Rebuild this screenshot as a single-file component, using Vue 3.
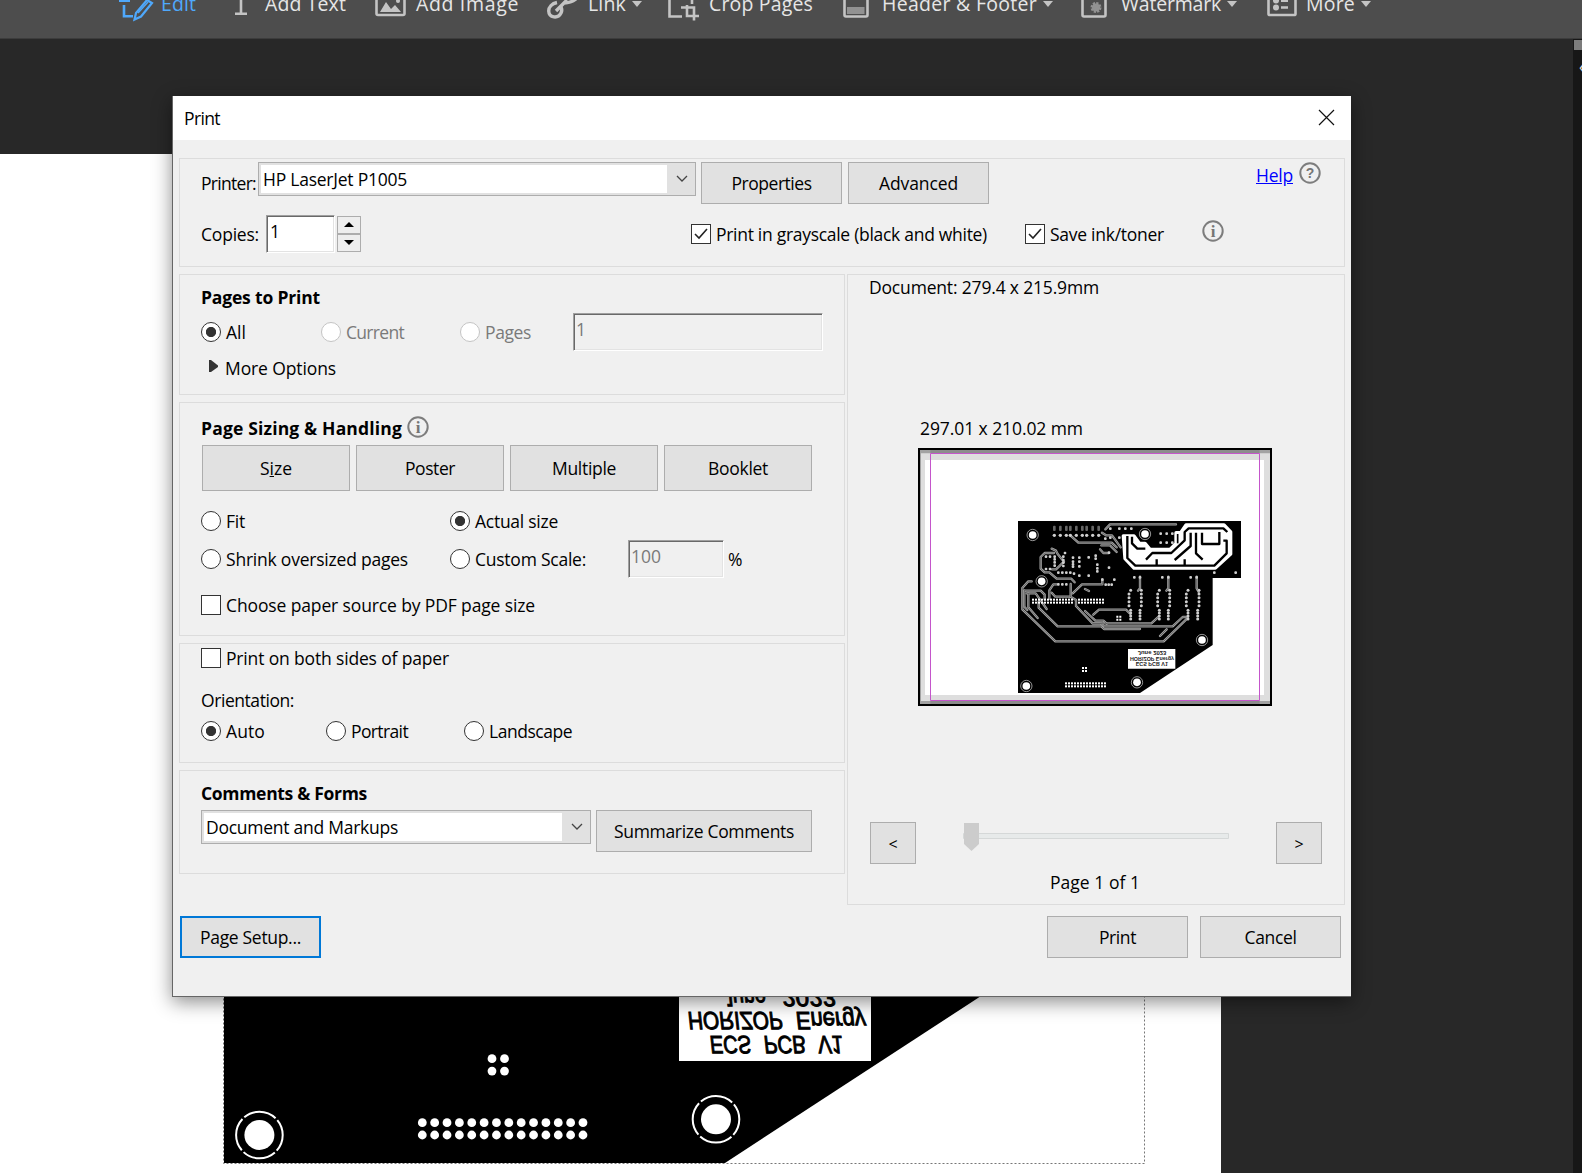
<script setup>
const tools = [
  { id: 'edit', label: 'Edit', fit: 35, active: true },
  { id: 'text', label: 'Add Text', fit: 81 },
  { id: 'image', label: 'Add Image', fit: 103 },
  { id: 'link', label: 'Link', fit: 38, menu: true },
  { id: 'crop', label: 'Crop Pages', fit: 104 },
  { id: 'header', label: 'Header & Footer', fit: 155, menu: true },
  { id: 'watermark', label: 'Watermark', fit: 100, menu: true },
  { id: 'more', label: 'More', fit: 49, menu: true },
]

const range = (n, start, step) => Array.from({ length: n }, (_, i) => start + i * step)
const headerPins = range(14, 422.3, 12.36)
const bigHoles = [[259.4, 1135], [716, 1119.3]]
const smallHoles = [[368, 375], [705, 372], [395, 514], [876, 690], [349, 828], [681, 817]]
const topPads = [433, 451, 469, 481, 499, 517, 530, 548, 566]
const driverColumns = [[662, 690], [748, 775], [834, 863]]
const padRow = [541, 552, 563, 575, 587, 601, 609, 618, 627]
const scatteredPads = [
  [586, 386], [601, 356], [628, 356], [646, 356], [664, 356], [601, 383], [628, 383],
  [752, 371], [770, 371], [787, 371], [752, 398], [770, 398], [787, 398],
  [465, 429], [508, 443], [508, 455], [508, 469], [536, 442], [557, 437], [557, 446],
  [562, 464], [562, 475], [562, 484], [597, 428], [597, 473], [536, 497], [508, 497],
  [489, 443], [489, 455], [489, 463], [489, 470], [492, 491], [408, 440], [420, 440],
  [408, 477], [420, 477], [445, 488], [457, 488], [469, 488], [481, 488], [445, 523],
  [457, 523], [469, 523], [577, 509], [613, 509], [587, 524], [596, 524], [605, 524],
  [434, 440], [434, 448], [434, 457], [434, 467], [460, 440], [460, 450], [460, 458], [460, 468],
  [913, 488], [977, 488], [673, 502], [690, 502], [757, 502], [775, 502], [842, 502], [860, 502],
]
const traces = [
  'M586 358 L600 343 H798',
  'M481 376 L505 398 H605 L620 412',
  'M576 368 L588 376 H606 L632 412',
  'M574 406 H600 L620 426',
  'M570 418 L580 429 H597',
  'M425 416 L438 422 L443 432 L462 455 L438 478 H426',
  'M432 429 H404 L392 441 V476 L404 487 H418 L440 506 H484 L494 517',
  'M482 522 V560 M440 523 H430 L418 541 V566',
  'M425 548 L436 560 H478',
  'M488 550 L516 523 H577 V508',
  'M365 514 H355 L337 534 V598 L436 694 H761 L832 625',
  'M343 542 H392 L404 554 V568',
  'M343 542 V590 L352 600',
  'M350 550 H377 L410 597',
  'M355 550 V592 L383 624',
  'M386 575 V593 L443 649 H574 L582 657 H690',
  'M482 560 L498 570 V588 L548 640 H724 L746 620',
  'M525 603 L556 632 H580 L590 641',
  'M548 640 H572 L582 649 H788 L818 621 H834',
  'M550 614 L567 599 H648 L661 612',
  'M750 678 L770 658',
  'M525 537 L537 543',
  'M690 500 V535 L684 542 M775 500 V535 L769 542 M860 500 V535 L866 546',
]

/* Spreads the letters of a label over a given width in pixels. */
const vFit = {
  mounted(el, { value }) {
    const natural = el.getBoundingClientRect().width
    el.style.letterSpacing = `${(value - natural) / el.textContent.length}px`
  },
}
</script>

<template>
  <div class="app">
    <header class="toolbar">
      <div v-for="t in tools" :key="t.id" class="tool" :class="[t.id, { active: t.active }]">
        <svg class="tool-icon" width="36" height="24" viewBox="0 0 36 24" fill="none" stroke="currentColor" stroke-width="2.6">
          <g v-if="t.id === 'edit'">
            <path d="M0 .7H11M5 5V16.3H14" />
            <path d="M15.5 19.5L17 13L28 0L33 3L22 16.500Z" stroke-width="2.2" /><path d="M19 13L29 2" stroke-width="1.5" />
          </g>
          <path v-else-if="t.id === 'text'" d="M6 0V13M0 13.700H12" />
          <g v-else-if="t.id === 'image'">
            <path d="M1.500 -4V13.500Q1.500 15 3 15H28Q29.500 15 29.500 13.500V-4" />
            <path d="M5 12L11 2L16 9L20 5L26 12Z" fill="currentColor" stroke="none" /><circle cx="23" cy="1" r="2" fill="currentColor" stroke="none" />
          </g>
          <g v-else-if="t.id === 'link'" stroke-width="3.400">
            <path d="M10 2.500C5 3.500 1.700 7 1.700 11C2 18 11 19 14 13C15 11 15 9 14 7" /><path d="M9 11L20 0M16 3Q23 3.500 29 -1" />
          </g>
          <g v-else-if="t.id === 'crop'">
            <path d="M1.500 -4V16.500H14" /><path d="M13 7.500H26V20.500M19 5V16H31M24 0V4" />
          </g>
          <g v-else-if="t.id === 'header'">
            <path d="M1.500 -4V15Q1.500 16.500 3 16.500H23Q24.500 16.500 24.500 15V-4" /><path d="M4 7H21.500V14H4Z" fill="#929292" stroke="none" />
          </g>
          <g v-else-if="t.id === 'watermark'">
            <path d="M1.500 -4V15Q1.500 16.500 3 16.500H23Q24.500 16.500 24.500 15V-4" />
            <circle cx="15" cy="7.500" r="4" fill="#929292" stroke="#929292" stroke-width="3" stroke-dasharray="2 1.100" />
          </g>
          <g v-else>
            <path d="M1.500 -4V14Q1.500 15 3 15H27Q28.500 15 28.500 14V-4" />
            <path d="M14 .8H21M14 7.500H21" /><circle cx="9" cy=".5" r="3" fill="currentColor" stroke="none" /><circle cx="9" cy="7.500" r="3" fill="currentColor" stroke="none" />
          </g>
        </svg>
        <span v-fit="t.fit" class="tool-label">{{ t.label }}</span>
        <i v-if="t.menu" class="arrow"></i>
      </div>
    </header>

    <main class="workspace">
      <div class="page">
        <svg width="1221" height="1019" viewBox="0 154 1221 1019">
          <rect x="223.5" y="600.5" width="921" height="563" fill="none" stroke="#777" stroke-dasharray="2 2" />
          <path d="M224 600H1144V889L979.500 997L725 1163H224Z" />
          <rect x="679" y="960" width="192" height="101" fill="#fff" />
          <g class="silk" transform="scale(1 -1)">
            <g transform="translate(722 -989) skewX(-6)"><text textLength="43" lengthAdjust="spacingAndGlyphs">June</text></g>
            <g transform="translate(781 -989) skewX(-6)"><text textLength="54" lengthAdjust="spacingAndGlyphs">2023</text></g>
            <g transform="translate(687 -1012) skewX(-6)"><text textLength="95" lengthAdjust="spacingAndGlyphs">HORIZOP</text></g>
            <g transform="translate(795 -1012) skewX(-6)"><text textLength="70" lengthAdjust="spacingAndGlyphs">Energy</text></g>
            <g transform="translate(709 -1036) skewX(-6)"><text textLength="41" lengthAdjust="spacingAndGlyphs">ECS</text></g>
            <g transform="translate(763 -1036) skewX(-6)"><text textLength="42" lengthAdjust="spacingAndGlyphs">PCB</text></g>
            <g transform="translate(817 -1036) skewX(-6)"><text textLength="25" lengthAdjust="spacingAndGlyphs">V1</text></g>
          </g>
          <g fill="#fff">
            <template v-for="y in [1058.700, 1071.100]" :key="y">
              <circle v-for="x in [492, 504.500]" :key="x" :cx="x" :cy="y" r="4.400" />
            </template>
            <template v-for="y in [1122.700, 1135]" :key="y">
              <circle v-for="x in headerPins" :key="x" :cx="x" :cy="y" r="4.400" />
            </template>
            <g v-for="[x, y] in bigHoles" :key="x">
              <circle :cx="x" :cy="y" r="15" />
              <circle :cx="x" :cy="y" r="23.300" fill="none" stroke="#fff" stroke-width="2" stroke-dasharray="34.100 2.500" stroke-dashoffset="17.050" />
            </g>
          </g>
        </svg>
      </div>
      <aside class="scrollbar"><div class="scroll-thumb"></div><div class="panel-arrow">‹</div></aside>
    </main>

    <section class="dialog">
      <div class="titlebar">
        <span v-fit="36">Print</span>
        <svg width="17" height="17" viewBox="0 0 17 17" stroke="#111" stroke-width="1.200"><path d="M1 1L16 16M16 1L1 16" /></svg>
      </div>

      <div class="body">
        <div class="group printer">
          <div class="row r-printer">
            <span v-fit="55" class="lbl">Printer:</span>
            <div class="combo"><div class="combo-text"><span v-fit="144">HP LaserJet P1005</span></div><svg width="12" height="8" viewBox="0 0 12 8"><path d="M1 1L6 6L11 1" /></svg></div>
            <button><span v-fit="80">Properties</span></button>
            <button><span v-fit="79">Advanced</span></button>
            <a v-fit="37">Help</a>
            <svg class="badge" width="22" height="22" viewBox="0 0 22 22"><circle cx="11" cy="11" r="9.700" /><text x="11" y="16">?</text></svg>
          </div>
          <div class="row r-copies">
            <span v-fit="58" class="lbl">Copies:</span>
            <div class="field"><span>1</span></div>
            <div class="spinner"><div><i class="up"></i></div><div><i class="down"></i></div></div>
            <div class="check"><svg width="18" height="18" viewBox="0 0 18 18"><path d="M3 9L7 13L15 4" /></svg></div>
            <span v-fit="271" class="lbl">Print in grayscale (black and white)</span>
            <div class="check"><svg width="18" height="18" viewBox="0 0 18 18"><path d="M3 9L7 13L15 4" /></svg></div>
            <span v-fit="114" class="lbl">Save ink/toner</span>
            <svg class="badge" width="22" height="22" viewBox="0 0 22 22"><circle cx="11" cy="11" r="9.700" /><text x="11" y="16.500" class="i">i</text></svg>
          </div>
        </div>

        <div class="columns">
          <div class="left">
            <div class="group pages">
              <h3 v-fit="119">Pages to Print</h3>
              <div class="row r-range">
                <div class="radio on"></div><span v-fit="20" class="lbl">All</span>
                <div class="radio off"></div><span v-fit="58" class="lbl dim">Current</span>
                <div class="radio off"></div><span v-fit="46" class="lbl dim">Pages</span>
                <div class="field disabled"><span>1</span></div>
              </div>
              <div class="more-options">
                <svg width="10" height="14" viewBox="0 0 10 14"><path d="M1 0L3 0L10 5.500V7L3 12H1Z" fill="#333" /></svg>
                <span v-fit="111">More Options</span>
              </div>
            </div>

            <div class="group sizing">
              <div class="heading">
                <h3 v-fit="201">Page Sizing &amp; Handling</h3>
                <svg class="badge" width="22" height="22" viewBox="0 0 22 22"><circle cx="11" cy="11" r="9.700" /><text x="11" y="16.500" class="i">i</text></svg>
              </div>
              <div class="modes">
                <button><span v-fit="32">S<u>i</u>ze</span></button>
                <button><span v-fit="50">Poster</span></button>
                <button><span v-fit="64">Multiple</span></button>
                <button><span v-fit="60">Booklet</span></button>
              </div>
              <div class="row r-fit">
                <div class="radio"></div><span v-fit="19" class="lbl">Fit</span>
                <div class="radio on"></div><span v-fit="83" class="lbl">Actual size</span>
              </div>
              <div class="row r-scale">
                <div class="radio"></div><span v-fit="182" class="lbl">Shrink oversized pages</span>
                <div class="radio"></div><span v-fit="111" class="lbl">Custom Scale:</span>
                <div class="field disabled"><span>100</span></div>
                <span v-fit="15" class="lbl">%</span>
              </div>
              <div class="row r-source">
                <div class="check"></div><span v-fit="309" class="lbl">Choose paper source by PDF page size</span>
              </div>
            </div>

            <div class="group layout">
              <div class="row r-duplex">
                <div class="check"></div><span v-fit="223" class="lbl">Print on both sides of paper</span>
              </div>
              <div class="orientation"><span v-fit="93">Orientation:</span></div>
              <div class="row r-orient">
                <div class="radio on"></div><span v-fit="39" class="lbl">Auto</span>
                <div class="radio"></div><span v-fit="57" class="lbl">Portrait</span>
                <div class="radio"></div><span v-fit="83" class="lbl">Landscape</span>
              </div>
            </div>

            <div class="group comments">
              <h3 v-fit="166">Comments &amp; Forms</h3>
              <div class="row r-comments">
                <div class="combo"><div class="combo-text"><span v-fit="192">Document and Markups</span></div><svg width="12" height="8" viewBox="0 0 12 8"><path d="M1 1L6 6L11 1" /></svg></div>
                <button><span v-fit="180">Summarize Comments</span></button>
              </div>
            </div>
          </div>

          <div class="group preview">
            <span v-fit="230" class="doc-size">Document: 279.4 x 215.9mm</span>
            <span v-fit="163" class="paper-size">297.01 x 210.02 mm</span>
            <svg class="sheet" width="354" height="258" viewBox="24 114 1062 774">
              <path d="M24 114H1086V888H24Z" />
              <path d="M30 120H1080V882H30Z" fill="#a2a2a2" />
              <path d="M61 120H1049V882H61Z" fill="#8c8c8c" />
              <path d="M33 130H1080V873H33Z" fill="#dedede" />
              <path d="M45 150H1062V855H45Z" fill="#fff" />
              <path d="M324 333H993V504H908V705L690 849H324Z" />
              <g fill="none" stroke-linejoin="round" stroke-linecap="round">
                <path v-for="d in traces" :key="d" :d="d" stroke="#a6a6a6" stroke-width="7" />
                <path v-for="d in traces" :key="'core' + d" :d="d" stroke="#5c5c5c" stroke-width="2.500" />
              </g>
              <g fill="#cfcfcf">
                <rect v-for="[x, y] in scatteredPads" :key="x + '-' + y" :x="x - 4" :y="y - 4" width="8" height="8" rx="3" />
                <g v-for="x in topPads" :key="x">
                  <circle :cx="x" cy="376" r="5" /><rect :x="x - 4" y="347" width="8" height="16" rx="3" fill="#666" />
                </g>
                <template v-for="([a, b], c) in driverColumns" :key="c">
                  <g v-for="y in padRow" :key="y">
                    <circle :cx="a - (y > 548 && y < 595 ? 5 : 0)" :cy="y" r="4.500" /><circle :cx="b + (y < 595 ? 4 : 0)" :cy="y" r="4.500" />
                  </g>
                </template>
              </g>
              <g fill="#fff">
                <template v-for="y in [569, 578]" :key="y">
                  <rect v-for="x in range(14, 366, 9)" :key="x" :x="x" :y="y - 3" width="6" height="6" />
                  <rect v-for="x in range(9, 504, 9)" :key="x" :x="x" :y="y - 3" width="6" height="6" />
                </template>
                <template v-for="y in [817, 826]" :key="y">
                  <rect v-for="x in range(14, 465, 9)" :key="x" :x="x" :y="y" width="6" height="6" />
                </template>
                <path d="M516 771h6v6h-6zM525 771h6v6h-6zM516 780h6v6h-6zM525 780h6v6h-6zM619 617h6v6h-6zM628 617h6v6h-6zM619 626h6v6h-6zM628 626h6v6h-6z" />
              </g>
              <!-- power area: poured copper, then its outline and inner gaps -->
              <path d="M640 378H672L688 400H705L720 418H780L798 400V368H812L828 345H942L962 366V432L916 474H672L645 446Z" fill="#fff" stroke="#fff" stroke-width="10" stroke-linejoin="round" />
              <g fill="none" stroke="#000" stroke-width="7" stroke-linejoin="round">
                <path d="M652 378V444L676 467H913L950 430V392H940M666 380V400L682 416H706" />
                <path d="M708 449L727 429H784L824 391V366L836 355H940L952 366" />
                <path d="M842 368V408L794 450M858 368V430L878 449M876 368V402H928V366M740 448V466M824 448V466" />
              </g>
              <path d="M803 372V400" stroke="#000" stroke-width="5" />
              <g v-for="[x, y] in smallHoles" :key="x + y">
                <circle :cx="x" :cy="y" r="20" /><circle :cx="x" :cy="y" r="11.500" fill="#fff" />
                <circle :cx="x" :cy="y" r="17" fill="none" stroke="#c8c8c8" stroke-width="2.200" />
              </g>
              <path d="M654 717H796V776H654Z" fill="#fff" />
              <g class="tiny" transform="scale(1 -1)">
                <text x="683" y="-723" textLength="86" lengthAdjust="spacingAndGlyphs">June 2023</text>
                <text x="660" y="-740" textLength="132" lengthAdjust="spacingAndGlyphs">HORIZOP Energy</text>
                <text x="677" y="-757" textLength="97" lengthAdjust="spacingAndGlyphs">ECS PCB V1</text>
              </g>
              <path d="M61.500 130.500H1048.500V871.500H61.500Z" fill="none" stroke="#c455cb" stroke-width="3" />
            </svg>
            <div class="nav">
              <button>&lt;</button>
              <div class="slider"><svg width="268" height="30" viewBox="0 0 268 30"><path d="M1.500 11.500H266.500V16.500H1.500Z" fill="#e7eaea" stroke="#d5d8d8" /><path d="M2 1H17V22L9.500 29L2 22Z" fill="#ccc" /></svg></div>
              <button>&gt;</button>
            </div>
            <span v-fit="90" class="page-of">Page 1 of 1</span>
          </div>
        </div>

        <footer>
          <button class="focus"><span v-fit="101">Page Setup...</span></button>
          <button class="print"><span v-fit="37">Print</span></button>
          <button><span v-fit="52">Cancel</span></button>
        </footer>
      </div>
    </section>
  </div>
</template>

<style>
body { margin: 0; overflow: hidden; }
</style>

<style scoped>
.app { position: relative; width: 1582px; height: 1173px; overflow: hidden; background: #282828; color: #000; font: 17.5px/24px "Open Sans", "Noto Sans", sans-serif; }
.app * { box-sizing: border-box; }
.app span, .app a { white-space: nowrap; }
svg { display: block; }

.toolbar { display: flex; height: 39px; background: #4d4d4d; border-bottom: 1px solid #3c3c3c; color: #c4c4c4; overflow: hidden; padding-left: 119px; }
.tool { display: flex; flex: none; }
.tool-icon { flex: none; overflow: visible; }
.tool-label { color: #e6e6e6; font-size: 19.500px; line-height: 26px; height: 26px; margin-top: -9px; }
.edit { color: #4fa8fb; width: 116px; }
.edit .tool-icon { margin-right: 6px; }
.edit .tool-label { color: #4fa8fb; }
.text { width: 140px; }
.text .tool-icon { margin-right: -6px; }
.image { width: 172px; }
.image .tool-icon { margin-right: 5px; }
.link { width: 121px; }
.link .tool-icon { margin-right: 5px; }
.crop { width: 175px; }
.crop .tool-icon { margin-right: 5px; }
.header { width: 238px; }
.header .tool-icon, .watermark .tool-icon { margin-right: 3px; }
.watermark { width: 186px; }
.watermark .tool-icon { margin-right: 4px; }
.more .tool-icon { margin-right: 3px; }
.arrow { width: 0; height: 0; margin: 1px 0 0 6px; border: 5px solid transparent; border-top: 6px solid #c4c4c4; border-bottom: 0; }

.workspace { display: flex; justify-content: space-between; height: 1134px; }
.page { width: 1221px; height: 1019px; margin-top: 115px; background: #fff; }
.silk { font: 25px "Liberation Sans", sans-serif; stroke: #000; stroke-width: 1; }
.scrollbar { width: 9px; background: #171717; overflow: hidden; }
.scroll-thumb { height: 10px; margin: 1px 0 0 1px; background: #7c7c7c; }
.panel-arrow { color: #ddd; margin-left: 6px; margin-top: 4px; }

.dialog { position: absolute; left: 172px; top: 96px; width: 1179px; height: 901px; border-left: 1px solid #666; border-bottom: 1px solid #666; background: #f0f0f0; box-shadow: 0 5px 18px rgba(0, 0, 0, .45); }
.titlebar { display: flex; justify-content: space-between; height: 44px; padding: 10px 16px 0 11px; background: #fff; }
.titlebar svg { margin-top: 3px; }
.body { padding: 18px 6px 0; }
.group { border: 1px solid #dcdcdc; }
.row { display: grid; align-items: start; justify-items: start; margin-left: 21px; }
h3 { width: max-content; margin: 0 0 0 21px; font-size: 17.500px; font-weight: 700; white-space: nowrap; }
.dim { color: #7a7a7a; }

button { display: flex; align-items: center; justify-content: center; height: 42px; padding: 0; border: 1px solid #adadad; border-radius: 0; background: #e1e1e1; color: #000; font: inherit; }
.combo { display: flex; justify-content: space-between; align-items: center; height: 34px; padding: 2px; border: 1px solid #adadad; background: #e1e1e1; }
.combo-text { height: 28px; padding-left: 2px; line-height: 28px; background: #fff; }
.combo svg { margin-right: 5px; fill: none; stroke: #444; stroke-width: 1.300; }
.field { height: 38px; padding: 3px 0 0 2px; border: 1px solid; border-color: #a0a0a0 #fff #fff #a0a0a0; background: #fff; box-shadow: inset 1px 1px #696969, inset -1px -1px #e3e3e3; }
.disabled { background: #f0f0f0; color: #7a7a7a; }
.check { width: 20px; height: 20px; border: 1px solid #333; background: #fff; }
.check path { fill: none; stroke: #222; stroke-width: 1.600; }
.radio { width: 20px; height: 20px; border: 1px solid #333; border-radius: 50%; background: #fff; }
.radio.on { background: radial-gradient(circle, #333 4.700px, #fff 5.500px); }
.radio.off { border-color: #c4c4c4; }
.badge circle { fill: none; stroke: #7d7d7d; stroke-width: 2; }
.badge text { fill: #757575; font: bold 14px "Liberation Sans", sans-serif; text-anchor: middle; }
.badge text.i { font: bold 17px "Liberation Serif", serif; }

.printer { height: 109px; }
.r-printer { grid-template-columns: 57px 443px 147px 408px 43px 1fr; height: 55px; }
.r-printer .lbl { margin-top: 12px; }
.r-printer .combo { width: 438px; margin-top: 3px; }
.r-printer .combo-text { width: 406px; }
.r-printer button { width: 141px; margin-top: 3px; }
.r-printer a { margin-top: 4px; color: #00f; text-decoration: underline; }
.r-printer .badge { margin-top: 3px; }
.r-copies { grid-template-columns: 65px 71px 354px 25px 309px 25px 152px 1fr; }
.r-copies .lbl { margin-top: 8px; }
.r-copies .field { width: 69px; margin-top: 1px; padding-left: 3px; }
.r-copies .check { margin-top: 10px; }
.r-copies .badge { margin-top: 6px; }
.spinner { width: 24px; height: 36px; margin-top: 2px; }
.spinner div { display: flex; align-items: center; justify-content: center; height: 18px; padding: 0 1px 1px 0; border: 1px solid #adadad; background: #eee; }
.up, .down { border: 5px solid transparent; }
.up { border-top: 0; border-bottom-color: #000; }
.down { border-bottom: 0; border-top-color: #000; }

.columns { display: flex; gap: 2px; margin-top: 7px; height: 632px; }
.left { display: flex; flex-direction: column; gap: 7px; width: 666px; }
.pages { height: 121px; padding-top: 10px; }
.r-range { grid-template-columns: 25px 95px 25px 114px 25px 88px 250px; height: 43px; margin-top: 4px; }
.r-range .lbl, .r-scale .lbl { margin-top: 7px; }
.r-range .radio, .r-scale .radio { margin-top: 9px; }
.r-range .field { width: 250px; }
.more-options { display: flex; margin-left: 28px; }
.more-options svg { margin: 4px 7px 0 0; }

.sizing { height: 234px; padding-top: 13px; }
.heading { display: flex; height: 29px; }
.heading .badge { margin: 0 0 0 5px; }
.modes { display: flex; gap: 6px; margin-left: 22px; }
.modes button { width: 148px; height: 46px; }
.modes u { text-decoration-thickness: 1px; }
.r-fit { grid-template-columns: 25px 224px 25px 1fr; height: 31px; margin-top: 18px; }
.r-fit .radio, .r-source .check, .r-duplex .check, .r-orient .radio { margin-top: 2px; }
.r-scale { grid-template-columns: 25px 224px 25px 153px 100px 1fr; height: 53px; }
.r-scale .field { width: 96px; }
.r-source, .r-duplex { grid-template-columns: 25px 1fr; }

.layout { height: 120px; padding-top: 2px; }
.orientation { margin: 18px 0 7px 21px; }
.r-orient { grid-template-columns: 25px 100px 25px 113px 25px 1fr; }

.comments { height: 104px; padding-top: 10px; }
.r-comments { grid-template-columns: 395px 216px; margin-top: 5px; }
.r-comments .combo { width: 390px; }
.r-comments .combo-text { width: 358px; }
.r-comments button { width: 216px; }

.preview { display: flex; flex-direction: column; align-items: flex-start; width: 498px; height: 631px; }
.doc-size { margin-left: 21px; }
.paper-size { margin: 117px 0 0 72px; }
.sheet { margin: 8px 0 0 70px; }
.tiny { font: bold 17px "Liberation Sans", sans-serif; fill: #222; }
.nav { display: flex; width: 452px; margin: 116px 0 0 22px; }
.nav button { width: 46px; padding-top: 2px; font-size: 16px; }
.slider { width: 360px; padding-left: 46px; }
.page-of { margin: 6px 0 0 202px; }

footer { display: flex; height: 42px; margin: 10px 4px 0 1px; }
footer button { width: 141px; }
footer .focus { border: 2px solid #0078d7; }
footer .print { margin: 0 12px 0 auto; }
</style>
